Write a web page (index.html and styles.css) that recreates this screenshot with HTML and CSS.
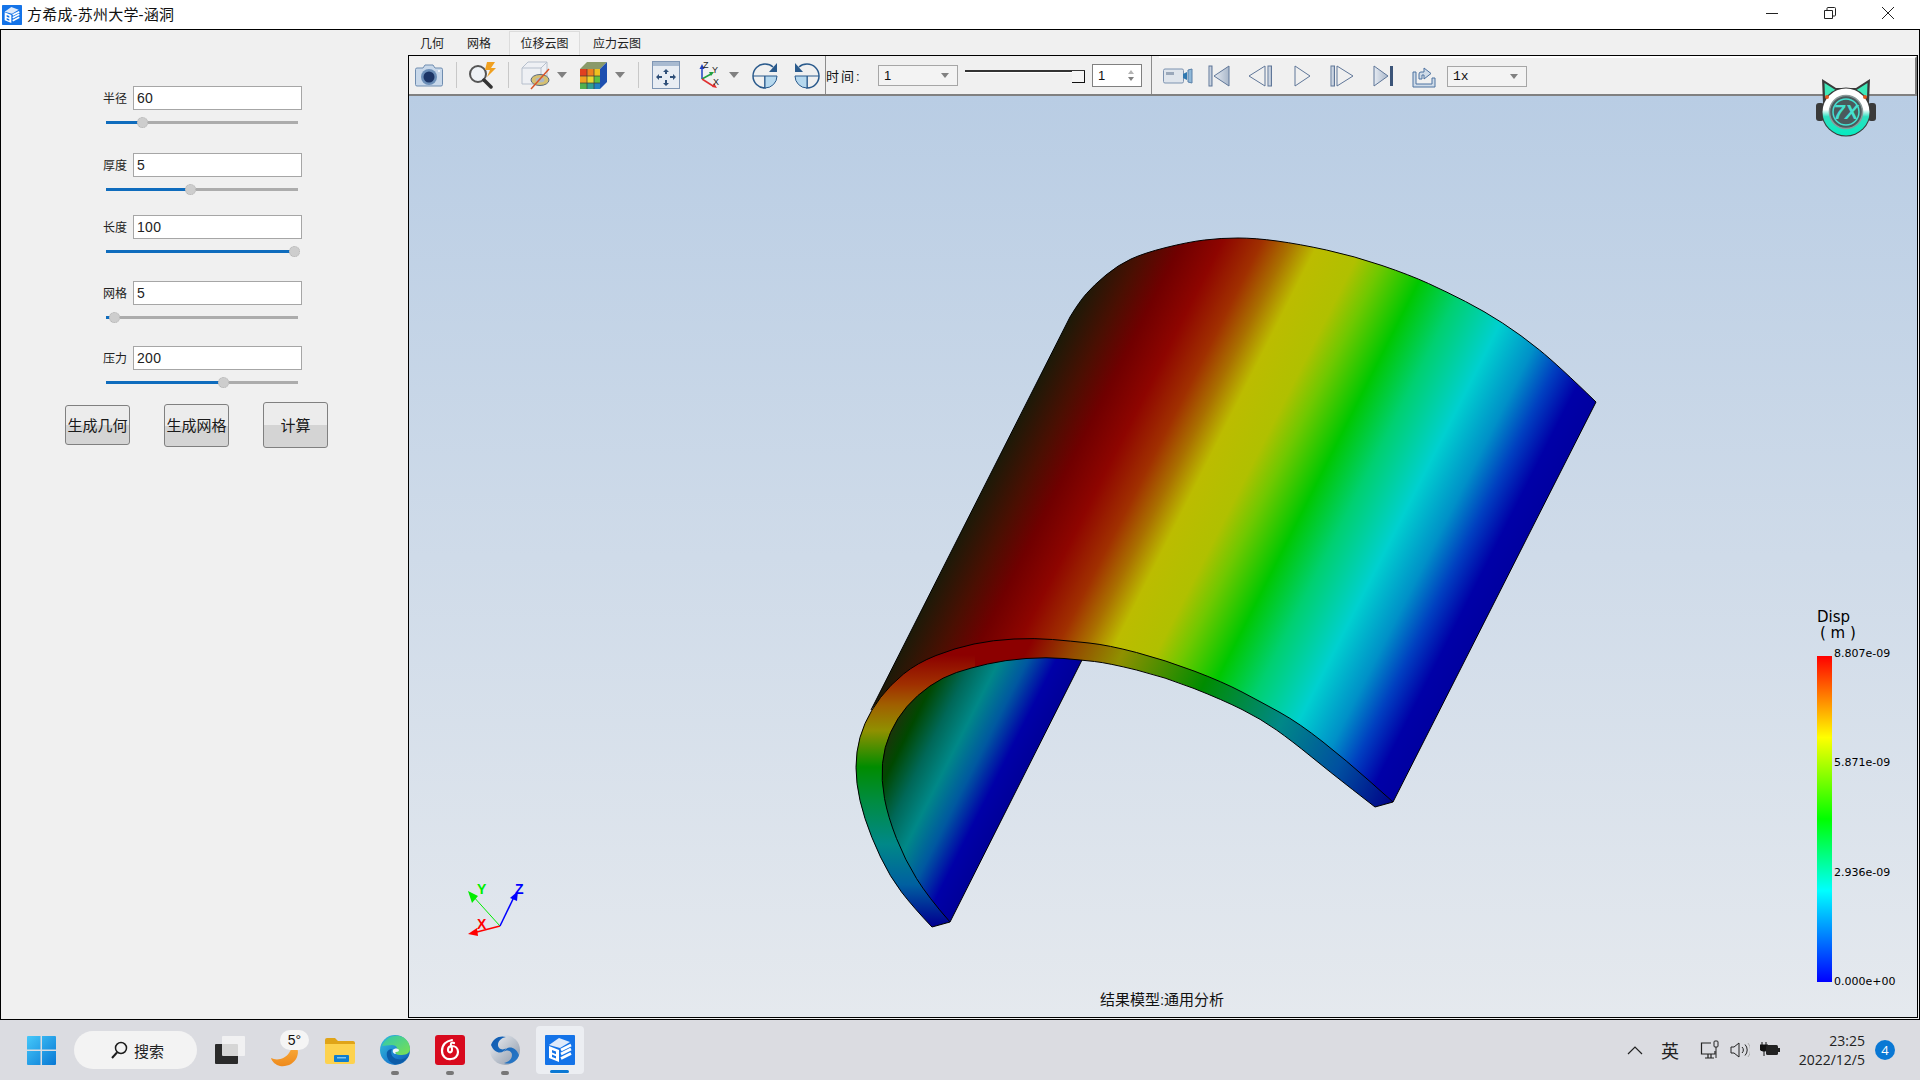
FILE: index.html
```html
<!DOCTYPE html>
<html lang="zh-CN">
<head>
  <meta charset="UTF-8">
  <title>方希成-苏州大学-涵洞</title>
  <link rel="stylesheet" href="styles.css">
</head>
<body>
  <svg class="defs" aria-hidden="true">
    <defs>
      <linearGradient id="btn-fill" x1="0" y1="0" x2="1" y2="0">
        <stop offset="0" stop-color="#e6ebf2"/>
        <stop offset="1" stop-color="#a9b7ca"/>
      </linearGradient>
      <symbol id="app-icon" viewBox="0 0 30 30">
        <rect width="30" height="30" rx="1" fill="#1473e8"/>
        <polygon points="4,10 14,3 25,7 15,13" fill="#dfeafa"/>
        <polygon points="4,11 14,15 14,27 4,23" fill="#fff"/>
        <path d="M7 15l4 1.6v2.6l-4-1.6zM7 19.600l4 1.600v2.400l-4-1.600z" fill="#1473e8"/>
        <path d="M16 15l10-5M16 19l10-5M16 23.500l10-5" stroke="#fff" stroke-width="2.600" fill="none"/>
      </symbol>
    </defs>
  </svg>

  <header class="titlebar">
    <svg class="title-icon"><use href="#app-icon"/></svg>
    <span class="title-text">方希成-苏州大学-涵洞</span>
    <div class="win-controls">
      <svg width="12" height="12" viewBox="0 0 12 12"><path d="M0 6.500h12" stroke="#222" fill="none"/></svg>
      <svg width="12" height="12" viewBox="0 0 12 12"><path d="M.5 3.500h8v8h-8zM3 3.500V1.500a1 1 0 0 1 1-1h6.500a1 1 0 0 1 1 1V8a1 1 0 0 1-1 1H8.500" stroke="#222" fill="none"/></svg>
      <svg width="12" height="12" viewBox="0 0 12 12"><path d="M0 0l12 12M12 0L0 12" stroke="#222" fill="none"/></svg>
    </div>
  </header>

  <div class="window">
    <aside class="panel">
      <div class="group">
        <div class="field"><label>半径</label><input class="num" value="60"></div>
        <div class="slider"><div class="slider-fill" style="width:19%"></div><div class="slider-thumb" style="left:19%"></div></div>
      </div>
      <div class="group group-2">
        <div class="field"><label>厚度</label><input class="num" value="5"></div>
        <div class="slider"><div class="slider-fill" style="width:44%"></div><div class="slider-thumb" style="left:44%"></div></div>
      </div>
      <div class="group group-3">
        <div class="field"><label>长度</label><input class="num" value="100"></div>
        <div class="slider"><div class="slider-fill" style="width:98%"></div><div class="slider-thumb" style="left:98%"></div></div>
      </div>
      <div class="group group-4">
        <div class="field"><label>网格</label><input class="num" value="5"></div>
        <div class="slider"><div class="slider-fill" style="width:4%"></div><div class="slider-thumb" style="left:4%"></div></div>
      </div>
      <div class="group group-5">
        <div class="field"><label>压力</label><input class="num" value="200"></div>
        <div class="slider"><div class="slider-fill" style="width:61%"></div><div class="slider-thumb" style="left:61%"></div></div>
      </div>
      <div class="actions">
        <button class="btn btn-geo">生成几何</button>
        <button class="btn btn-mesh">生成网格</button>
        <button class="btn btn-calc">计算</button>
      </div>
    </aside>

    <main class="main">
      <nav class="tabs">
        <a class="tab tab-geo">几何</a>
        <a class="tab tab-mesh">网格</a>
        <a class="tab tab-active">位移云图</a>
        <a class="tab">应力云图</a>
      </nav>

      <section class="pane">
        <div class="toolbar">
          <div class="tools">
            <svg class="m6" width="28" height="25" viewBox="0 0 28 25">
              <path d="M2 5h6l2-3h8l2 3h6a1.500 1.500 0 0 1 1.500 1.500v15A1.500 1.500 0 0 1 26 23H2a1.500 1.500 0 0 1-1.500-1.500v-15A1.500 1.500 0 0 1 2 5z" fill="#c8d8ea" stroke="#6f8db0"/>
              <circle cx="14" cy="14" r="8" fill="#6c8fb8"/>
              <circle cx="14" cy="14" r="5.500" fill="#1c3566"/>
              <circle cx="24" cy="8" r="1" fill="#fff"/>
            </svg>
            <i class="sep m13"></i>
            <svg class="m11" width="29" height="27" viewBox="0 0 29 27">
              <circle cx="10" cy="12" r="8" fill="#eef2f6" stroke="#555" stroke-width="2"/>
              <path d="M16 18l7 7" stroke="#333" stroke-width="3.500" stroke-linecap="round"/>
              <path d="M19 0h8l-4 6h5l-9 9 3-7h-5z" fill="#f0a020"/>
            </svg>
            <i class="sep m11"></i>
            <svg class="m12" width="29" height="29" viewBox="0 0 29 29">
              <path d="M1 7l6-6h19v16l-6 6H1z" fill="#eef0f4" stroke="#b6bfcc"/>
              <path d="M1 7h19v16M20 7l6-6" fill="none" stroke="#b6bfcc"/>
              <ellipse cx="19" cy="19" rx="9" ry="5.500" fill="#d6c070" stroke="#5a6a80"/>
              <ellipse cx="19" cy="19" rx="4.500" ry="2.500" fill="#aeb8c4"/>
              <path d="M28 8L10 28" stroke="#d8542a" stroke-width="1.500"/>
            </svg>
            <i class="caret m7"></i>
            <svg class="m13" width="27" height="27" viewBox="0 0 27 27">
              <polygon points="0,7 7,0 27,0 20,7" fill="#8a9a6a"/>
              <polygon points="20,7 27,0 27,20 20,27" fill="#1d4fb0"/>
              <rect y="7" width="7" height="7" fill="#e04020"/><rect x="7" y="7" width="7" height="7" fill="#f08020"/><rect x="14" y="7" width="6" height="7" fill="#f0c020"/>
              <rect y="14" width="7" height="7" fill="#f0a020"/><rect x="7" y="14" width="7" height="7" fill="#e8d830"/><rect x="14" y="14" width="6" height="7" fill="#60c040"/>
              <rect y="21" width="7" height="6" fill="#50b050"/><rect x="7" y="21" width="7" height="6" fill="#30a090"/><rect x="14" y="21" width="6" height="6" fill="#2080c0"/>
              <path d="M7 7v20M14 7v20M0 14h20M0 21h20" stroke="#3a3a3a" stroke-width=".7"/>
            </svg>
            <i class="caret m8"></i>
            <i class="sep m13"></i>
            <svg class="m13" width="28" height="28" viewBox="0 0 28 28">
              <rect x=".5" y=".5" width="27" height="27" fill="#e8edf3" stroke="#7f96b4"/>
              <rect x="1" y="1" width="26" height="4" fill="#a8bad0"/>
              <path d="M14 8l-3 3h2v2h2v-2h2zM14 25l-3-3h2v-3h2v3h2zM4 16l3-3v2h3v2H7v2zM24 16l-3-3v2h-3v2h3v2z" fill="#2f4f78"/>
            </svg>
            <svg class="m17" width="24" height="28" viewBox="0 0 24 28">
              <path d="M5 18V7" stroke="#2040c0" stroke-width="1.500"/><path d="M5 3l-2.500 5h5z" fill="#2040c0"/>
              <path d="M5 18l9-5" stroke="#20a040" stroke-width="1.500"/><path d="M17 11l-5 0 2 4z" fill="#20a040"/>
              <path d="M5 18l11 7" stroke="#e03030" stroke-width="1.500"/><path d="M20 27l-5-1 2-4z" fill="#e03030"/>
              <text class="axis-mini" x="6" y="7">Z</text><text class="axis-mini" x="15" y="12">Y</text><text class="axis-mini" x="16" y="24">X</text>
            </svg>
            <i class="caret m8"></i>
            <svg class="m13" width="26" height="27" viewBox="0 0 26 27">
              <path d="M13 14V26a12 12 0 0 1 0-24c3 0 6 1 8 3" fill="none" stroke="#2a5a8c" stroke-width="1.500"/>
              <path d="M1 14h24a12 12 0 0 1-12 12V14" fill="#b6d8ee" stroke="#2a5a8c"/>
              <path d="M17 10h8V1z" fill="#2a5a8c"/>
            </svg>
            <svg class="m16" width="26" height="27" viewBox="0 0 26 27">
              <path d="M13 14V26a12 12 0 0 0 0-24c-3 0-6 1-8 3" fill="none" stroke="#2a5a8c" stroke-width="1.500"/>
              <path d="M25 14H1a12 12 0 0 0 12 12V14" fill="#b6d8ee" stroke="#2a5a8c"/>
              <path d="M9 10H1V1z" fill="#2a5a8c"/>
            </svg>
            <i class="sep sep-tall m5"></i>
            <span class="time-label">时间:</span>
            <div class="combo m16"><span>1</span><i class="caret caret-sm"></i></div>
            <div class="track m7"><i class="track-handle"></i></div>
            <div class="spin m7"><span>1</span><div class="spin-arrows"><i class="up"></i><i class="down"></i></div></div>
            <i class="sep sep-tall m9"></i>
          </div>
          <div class="player">
            <svg class="m4" width="30" height="16" viewBox="0 0 30 16">
              <rect x=".5" y="1" width="20" height="14" rx="1.500" fill="#dfe5ec" stroke="#7d93b0"/>
              <rect x="3" y="4" width="8" height="3" fill="#9aa8ba"/>
              <path d="M20 6l4-2v8l-4-2z" fill="#2f78b0"/><path d="M25 2l4-1v14l-4-1z" fill="#8fb8d8" stroke="#5a80a8"/>
            </svg>
            <svg class="m15" width="22" height="22" viewBox="0 0 22 22"><rect x="1" y="1" width="3" height="20" fill="url(#btn-fill)" stroke="#5f7698"/><path d="M21 1v20L6 11z" fill="url(#btn-fill)" stroke="#5f7698"/></svg>
            <svg class="m18" width="25" height="22" viewBox="0 0 25 22"><path d="M17 1v20L1 11z" fill="none" stroke="#5f7698"/><rect x="20" y="1" width="3.500" height="20" fill="url(#btn-fill)" stroke="#5f7698"/></svg>
            <svg class="m21" width="17" height="22" viewBox="0 0 17 22"><path d="M1 1v20l15-10z" fill="none" stroke="#5f7698"/></svg>
            <svg class="m19" width="24" height="22" viewBox="0 0 24 22"><rect x="1" y="1" width="3.500" height="20" fill="url(#btn-fill)" stroke="#5f7698"/><path d="M7 1v20l16-10z" fill="none" stroke="#5f7698"/></svg>
            <svg class="m19" width="21" height="22" viewBox="0 0 21 22"><path d="M1 1v20l14-10z" fill="url(#btn-fill)" stroke="#5f7698"/><rect x="17" y="1" width="3" height="20" fill="#3b5478"/></svg>
            <svg class="m18" width="24" height="24" viewBox="0 0 24 24"><path d="M1 8v15h22v-9h-3v6H4V8z" fill="#cfdbe8" stroke="#4d72a0"/><path d="M7 15v-5a2 2 0 0 1 2-2h3V4l7 5.500L12 15v-4H10v4z" fill="#cfdbe8" stroke="#4d72a0"/></svg>
            <div class="combo combo-speed m11"><span>1x</span><i class="caret caret-sm"></i></div>
          </div>
        </div>

        <div class="viewport">
          <svg class="scene" viewBox="409 96 1507 921" width="1507" height="921">
            <defs>
              <linearGradient id="outer" gradientUnits="userSpaceOnUse" x1="1070" y1="317" x2="1524" y2="547">
                <stop offset="0" stop-color="#1c1a08"/>
                <stop offset=".07" stop-color="#4a0f02"/>
                <stop offset=".13" stop-color="#700000"/>
                <stop offset=".2" stop-color="#8e0500"/>
                <stop offset=".27" stop-color="#a03000"/>
                <stop offset=".32" stop-color="#aa7000"/>
                <stop offset=".37" stop-color="#bcbc00"/>
                <stop offset=".45" stop-color="#b0c000"/>
                <stop offset=".5" stop-color="#70c800"/>
                <stop offset=".58" stop-color="#00c800"/>
                <stop offset=".66" stop-color="#00d070"/>
                <stop offset=".76" stop-color="#00d0d0"/>
                <stop offset=".84" stop-color="#0090c8"/>
                <stop offset=".895" stop-color="#0040c0"/>
                <stop offset=".95" stop-color="#0000a8"/>
                <stop offset="1" stop-color="#0000a0"/>
              </linearGradient>
              <linearGradient id="inner" gradientUnits="userSpaceOnUse" x1="889" y1="714" x2="1022" y2="781">
                <stop offset="0" stop-color="#2a2a10"/>
                <stop offset=".17" stop-color="#004800"/>
                <stop offset=".34" stop-color="#006858"/>
                <stop offset=".5" stop-color="#008888"/>
                <stop offset=".67" stop-color="#0058a0"/>
                <stop offset=".84" stop-color="#0000a8"/>
                <stop offset="1" stop-color="#000098"/>
              </linearGradient>
              <linearGradient id="rim-right" gradientUnits="userSpaceOnUse" x1="1070" y1="317" x2="1524" y2="547">
                <stop offset=".1" stop-color="#8c0000"/>
                <stop offset=".22" stop-color="#8c0000"/>
                <stop offset=".3" stop-color="#944800"/>
                <stop offset=".39" stop-color="#909000"/>
                <stop offset=".56" stop-color="#008c00"/>
                <stop offset=".73" stop-color="#008888"/>
                <stop offset=".87" stop-color="#0050a0"/>
                <stop offset="1" stop-color="#000088"/>
              </linearGradient>
              <linearGradient id="rim-left" gradientUnits="userSpaceOnUse" x1="0" y1="655" x2="0" y2="925">
                <stop offset="0" stop-color="#8c0000"/>
                <stop offset=".11" stop-color="#a03000"/>
                <stop offset=".185" stop-color="#a06000"/>
                <stop offset=".28" stop-color="#909000"/>
                <stop offset=".415" stop-color="#008c00"/>
                <stop offset=".54" stop-color="#008c40"/>
                <stop offset=".7" stop-color="#008888"/>
                <stop offset=".85" stop-color="#0060a0"/>
                <stop offset="1" stop-color="#000090"/>
              </linearGradient>
              <path id="rim" d="M1393 802L1370 781.500Q1347 761 1323 742Q1299 723 1280 712.500Q1261 702 1242 692Q1223 682 1194 671Q1165 660 1136.500 652.500Q1108 645 1089 643Q1070 641 1052.500 639.500Q1035 638 1014 639Q993 640 974 644Q955 648 936 655.500Q917 663 903.500 674Q890 685 880.500 697.500Q871 710 865 723.500Q859 737 857 752Q855 767 857 783.500Q859 800 865 818.500Q871 837 880.500 857Q890 877 901.500 892Q913 907 932 927L950 922Q928 897 916.500 878.500Q905 860 896.500 838.500Q888 817 884.500 798.500Q881 780 882.500 763.500Q884 747 890.500 732.500Q897 718 907 706.500Q917 695 930 686Q943 677 956.500 672.500Q970 668 987.500 664Q1005 660 1026 658.500Q1047 657 1064 658.500Q1081 660 1094.500 661.500Q1108 663 1136.500 670Q1165 677 1194 688.500Q1223 700 1242 709.500Q1261 719 1276.500 730Q1292 741 1311 756.500Q1330 772 1352.500 789.500L1375 807Z"/>
              <clipPath id="clip-left"><rect x="800" y="600" width="176" height="360"/></clipPath>
              <clipPath id="clip-right"><rect x="975" y="600" width="500" height="360"/></clipPath>
            </defs>
            <!-- culvert shell -->
            <path d="M1070 317Q1079 302 1086.500 293.500Q1094 285 1106 275Q1118 265 1131 259Q1144 253 1166 247.500Q1188 242 1204.500 240Q1221 238 1238 238Q1255 238 1277 241Q1299 244 1326.500 250Q1354 256 1382 265.500Q1410 275 1428.500 283.500Q1447 292 1465.500 301.500Q1484 311 1502.500 323Q1521 335 1539.500 350Q1558 365 1596 402L1393 802L1299 726L1223 685L1165 663L1108 648L1035 641L955 651L917 666L890 688L871 710Z" fill="url(#outer)"/>
            <polygon points="1082,655 1082,660 950,922 926,899 902,862 884,818 877,780 880,746 893,716 914,692 941,674 969,665 1005,657 1047,654" fill="url(#inner)"/>
            <use href="#rim" fill="url(#rim-left)" clip-path="url(#clip-left)"/>
            <use href="#rim" fill="url(#rim-right)" clip-path="url(#clip-right)"/>
            <use href="#rim" fill="none" stroke="#000" stroke-width="1"/>
            <path class="edge" d="M1070 317Q1079 302 1086.500 293.500Q1094 285 1106 275Q1118 265 1131 259Q1144 253 1166 247.500Q1188 242 1204.500 240Q1221 238 1238 238Q1255 238 1277 241Q1299 244 1326.500 250Q1354 256 1382 265.500Q1410 275 1428.500 283.500Q1447 292 1465.500 301.500Q1484 311 1502.500 323Q1521 335 1539.500 350Q1558 365 1596 402L1393 802"/>
            <path class="edge" d="M1082 660L950 922M1070 317L871 710"/>
            <!-- axis triad -->
            <path d="M500 926L473 933" stroke="#f00" stroke-width="1.500"/>
            <path d="M468 934l9-6 1 8z" fill="#f00"/>
            <path d="M500 926L472 895" stroke="#0e0" stroke-width="1"/>
            <path d="M468 891l10 5-6 7z" fill="#0e0"/>
            <path d="M500 926L514 897" stroke="#00f" stroke-width="1.500"/>
            <path d="M518 891l-1 10-7-3z" fill="#00f"/>
            <text class="axis-label axis-x" x="477" y="929">X</text>
            <text class="axis-label axis-y" x="477" y="894">Y</text>
            <text class="axis-label axis-z" x="515" y="894">Z</text>
          </svg>

          <div class="legend">
            <div class="legend-title">Disp<div class="legend-unit">( m )</div></div>
            <div class="legend-scale">
              <div class="legend-bar"></div>
              <div class="legend-labels">
                <span>8.807e-09</span><span>5.871e-09</span><span>2.936e-09</span><span>0.000e+00</span>
              </div>
            </div>
          </div>
          <div class="caption">结果模型:通用分析</div>
        </div>

        <svg class="mascot" width="60" height="58" viewBox="0 0 60 58">
          <defs>
            <linearGradient id="mascot-face" x1="0" y1="0" x2="0" y2="1">
              <stop offset=".45" stop-color="#fff"/>
              <stop offset=".6" stop-color="#2fe0c0"/>
              <stop offset="1" stop-color="#05eac0"/>
            </linearGradient>
          </defs>
          <path d="M7 24L6 0l14 9h20l14-9-1 24z" fill="#3a3a3a"/>
          <path d="M9 18L8.500 4l11 7zM51 18l.5-14-11 7z" fill="#3fe8b8"/>
          <rect x="0" y="24" width="8" height="18" rx="3" fill="#3a3a3a"/>
          <rect x="52" y="24" width="8" height="18" rx="3" fill="#3a3a3a"/>
          <circle cx="30" cy="33" r="24.500" fill="#3a3a3a"/>
          <circle cx="30" cy="33" r="23.500" fill="url(#mascot-face)"/>
          <circle cx="11" cy="18" r="2" fill="#e05a20"/>
          <circle cx="49" cy="18" r="2" fill="#e05a20"/>
          <circle cx="30" cy="33" r="16.500" fill="#4a5a5c" stroke="#8a9a9a" stroke-width="1.500"/>
          <circle cx="30" cy="33" r="13" fill="none" stroke="#45e0d0" stroke-width="1.500"/>
          <text class="mascot-text" x="30" y="40">7X</text>
        </svg>
      </section>
    </main>
  </div>

  <footer class="taskbar">
    <div class="task-left">
      <svg class="start" width="29" height="29" viewBox="0 0 29 29">
        <defs><linearGradient id="win" x1="0" y1="0" x2="1" y2="1"><stop offset="0" stop-color="#45c8fa"/><stop offset="1" stop-color="#0878d4"/></linearGradient></defs>
        <path d="M0 1a1 1 0 0 1 1-1h12.500v13.500H0zM15 0h13a1 1 0 0 1 1 1v12.500H15zM0 15h13.500v14H1a1 1 0 0 1-1-1zM15 15h14v13a1 1 0 0 1-1 1H15z" fill="url(#win)"/>
      </svg>
      <div class="search">
        <svg width="17" height="18" viewBox="0 0 17 18"><circle cx="10" cy="7" r="5.500" fill="none" stroke="#1c1c1c" stroke-width="1.500"/><path d="M6 11.500L1 17" stroke="#1c1c1c" stroke-width="2"/></svg>
        <span>搜索</span>
      </div>
      <svg class="taskview" width="30" height="28" viewBox="0 0 30 28">
        <rect y="8" width="23" height="20" rx="1" fill="#2a2a2a"/>
        <rect x="7" width="23" height="20" rx="1" fill="#f4f4f4" opacity=".85"/>
      </svg>
      <div class="weather">
        <svg width="28" height="24" viewBox="0 0 28 24">
          <defs><linearGradient id="moon" x1="0" y1="0" x2="0" y2="1"><stop offset="0" stop-color="#fbb040"/><stop offset="1" stop-color="#ee8a1c"/></linearGradient></defs>
          <path d="M0 15c6 3 14 1 18-5 2-3 4-7 4-10 5 3 6 9 4 14-3 7-10 10-17 9-4-1-8-4-9-8z" fill="url(#moon)"/>
        </svg>
        <span class="weather-temp">5°</span>
      </div>
      <svg class="files" width="30" height="26" viewBox="0 0 30 26">
        <path d="M0 2a2 2 0 0 1 2-2h8l3 3h15a2 2 0 0 1 2 2v3H0z" fill="#e0a418"/>
        <path d="M0 6h30v18a2 2 0 0 1-2 2H2a2 2 0 0 1-2-2z" fill="#fdd24e"/>
        <rect x="9" y="17" width="15" height="7" rx="1" fill="#0f7ed0"/>
        <rect x="12" y="19" width="9" height="1.500" fill="#7cc4f0"/>
      </svg>
      <div class="app app-edge">
        <svg width="30" height="30" viewBox="0 0 30 30">
          <defs>
            <linearGradient id="edge-a" x1="0" y1="0" x2="1" y2="1"><stop offset="0" stop-color="#38c6d8"/><stop offset=".6" stop-color="#1a7fd0"/><stop offset="1" stop-color="#0c5ca8"/></linearGradient>
            <linearGradient id="edge-b" x1="0" y1="0" x2="1" y2="1"><stop offset="0" stop-color="#30c8b0"/><stop offset="1" stop-color="#7ae050"/></linearGradient>
          </defs>
          <circle cx="15" cy="15" r="15" fill="url(#edge-a)"/>
          <path d="M2 11C5 3 13 0 19 1c7 1 11 7 11 13 0 5-5 6-10 6-3 0-5-1-5-3 0-1 1-1 2-2 1-2-1-5-5-5-4 0-8 1-10 1z" fill="url(#edge-b)"/>
          <path d="M12 14c-2 4 0 9 5 10 4 1 8 0 11-3-3 6-9 9-14 8-6-2-8-8-7-12 1-2 3-3 5-3z" fill="#0c5ca8"/>
          <path d="M13 15c1-2 5-2 6 0 0 1-1 2-3 2-1 0-1 1 0 2-2 0-4-2-3-4z" fill="#eef6fb"/>
        </svg>
        <i class="app-dot"></i>
      </div>
      <div class="app app-music">
        <svg width="30" height="30" viewBox="0 0 30 30">
          <rect width="30" height="30" rx="3" fill="#d80a1e"/>
          <path d="M17 5c-6 1-10 5-10 11 0 5 4 9 9 8 4 0 7-3 7-7s-3-6-6-6c-3 0-4 2-4 4s2 3 3 2c2-1 1-4 0-7-.5-2 1-3 3-2" fill="none" stroke="#fff" stroke-width="2.200" stroke-linecap="round"/>
        </svg>
        <i class="app-dot"></i>
      </div>
      <div class="app app-swirl">
        <svg width="30" height="30" viewBox="0 0 30 30">
          <defs>
            <linearGradient id="swirl-a" x1="0" y1="0" x2="1" y2="1"><stop offset="0" stop-color="#0e5ab0"/><stop offset="1" stop-color="#2a7ac8"/></linearGradient>
            <linearGradient id="swirl-b" x1="0" y1="0" x2="1" y2="1"><stop offset="0" stop-color="#f0f2f5"/><stop offset="1" stop-color="#8a96a8"/></linearGradient>
          </defs>
          <circle cx="15" cy="15" r="15" fill="url(#swirl-b)"/>
          <path d="M1 10C3 3 10 0 16 2c-5 1-8 4-8 8s5 6 8 3c-2 6-11 7-15-3zM29 20c-2 7-9 10-15 8 5-1 8-4 8-8s-5-6-8-3c2-6 11-7 15 3z" fill="url(#swirl-a)"/>
        </svg>
        <i class="app-dot"></i>
      </div>
      <div class="app app-active">
        <svg width="30" height="30"><use href="#app-icon"/></svg>
        <i class="app-bar"></i>
      </div>
    </div>

    <div class="tray">
      <svg class="tray-chevron" width="16" height="9" viewBox="0 0 16 9"><path d="M1 8l7-7 7 7" fill="none" stroke="#222" stroke-width="1.200"/></svg>
      <span class="tray-ime">英</span>
      <svg class="tray-net" width="20" height="20" viewBox="0 0 20 20">
        <path d="M11 3H1.500v11H15v-3M5 18h9M8 14v4M11 14v4" fill="none" stroke="#222" stroke-width="1.200"/>
        <rect x="14" y="1" width="4" height="6" rx="1" fill="none" stroke="#222"/><path d="M16 7v11" stroke="#222"/>
      </svg>
      <svg class="tray-vol" width="20" height="16" viewBox="0 0 20 16">
        <path d="M1 5h3l5-4v14l-5-4H1z" fill="none" stroke="#222"/>
        <path d="M12 5a4 4 0 0 1 0 6" fill="none" stroke="#222"/>
        <path d="M15 2.500a8 8 0 0 1 0 11" fill="none" stroke="#222"/>
        <path d="M18 1a11 11 0 0 1 0 14" fill="none" stroke="#aaa"/>
      </svg>
      <svg class="tray-bat" width="20" height="16" viewBox="0 0 20 16">
        <path d="M2 0v3M6 0v3M0 3h8v3a3 3 0 0 1-3 3H3a3 3 0 0 1-3-3zM4 9v5" stroke="#111" fill="#111"/>
        <rect x="6" y="3" width="12" height="10" rx="1.500" fill="#222"/>
        <rect x="18" y="6" width="2" height="4" fill="#222"/>
      </svg>
      <div class="clock"><span>23:25</span><span>2022/12/5</span></div>
      <span class="badge">4</span>
    </div>
  </footer>
</body>
</html>
```

FILE: styles.css
```css
* { box-sizing: border-box; }
html, body { margin: 0; height: 100%; }
body { width: 1920px; height: 1080px; overflow: hidden; display: flex; flex-direction: column; background: #fff; font-family: "Liberation Sans", "Noto Sans CJK SC", sans-serif; color: #111; }
svg { display: block; flex: none; }
.defs { position: absolute; width: 0; height: 0; }

/* title bar */
.titlebar { height: 29px; display: flex; align-items: center; background: #fff; padding-left: 2px; flex: none; }
.title-icon { width: 20px; height: 20px; }
.title-text { margin-left: 5px; padding-bottom: 2px; font-size: 15px; letter-spacing: .2px; }
.win-controls { margin-left: auto; display: flex; gap: 46px; padding-right: 26px; margin-top: -3px; }

/* window */
.window { height: 991px; flex: none; display: flex; border: 1px solid #000; background: #f0f0f0; }
.panel { width: 407px; flex: none; padding-top: 56px; }
.group-2 { margin-top: 29px; }
.group-3 { margin-top: 24px; }
.group-4 { margin-top: 28px; }
.group-5 { margin-top: 27px; }
.field { display: flex; align-items: center; height: 24px; }
.field label { width: 132px; padding: 0 6px 2px 0; text-align: right; font-size: 12px; color: #222; }
.num { width: 169px; height: 24px; border: 1px solid #a6a6a6; background: #fff; padding: 0 3px; font: 14px "Liberation Sans", sans-serif; letter-spacing: .3px; color: #222; outline: none; }
.slider { position: relative; width: 192px; height: 3px; margin: 11px 0 0 105px; background: #acacac; }
.slider-fill { height: 3px; background: #0f6cbd; }
.slider-thumb { position: absolute; top: -4px; width: 11px; height: 11px; margin-left: -5px; border-radius: 50%; background: #cdcdcd; border: 1px dotted #b4b4b4; }
.actions { display: flex; gap: 34px; margin-top: 18px; padding-left: 64px; align-items: flex-start; }
.btn { width: 65px; padding: 0 0 2px; border: 1px solid #808080; border-radius: 3px; background: linear-gradient(#ececec 50%, #d4d4d4 50%); font: 15px "Noto Sans CJK SC", sans-serif; color: #1a1a1a; }
.btn-geo { height: 40px; margin-top: 3px; }
.btn-mesh { height: 43px; margin-top: 2px; }
.btn-calc { height: 46px; }

/* tabs */
.main { flex: 1; min-width: 0; display: flex; flex-direction: column; }
.tabs { height: 25px; flex: none; display: flex; align-items: flex-end; padding-left: 1px; font-size: 12px; }
.tab { height: 24px; line-height: 26px; padding: 0 11px; color: #222; }
.tab-geo { padding-right: 0; }
.tab-mesh { padding: 0 0 0 23px; }
.tab-active { margin-left: 18px; width: 71px; padding: 0; text-align: center; background: #f3f3f3; border: 1px solid #dcdcdc; border-bottom: none; line-height: 24px; }
.tab-active + .tab { margin-left: 2px; }

/* result pane */
.pane { position: relative; flex: 1; display: flex; flex-direction: column; min-height: 0; margin: 0 1px 1px 0; border: 1px solid #000; border-right-color: #000; }
.toolbar { height: 40px; flex: none; display: flex; background: #f0f0f0; border-bottom: 2px solid #808080; }
.tools { display: flex; align-items: center; height: 38px; width: 750px; flex: none; }
.player { flex: 1; display: flex; align-items: center; height: 38px; border-top: 2px solid #fff; border-right: 2px solid #7a7a7a; }

.m4 { margin-left: 4px; }
.m5 { margin-left: 5px; }
.m6 { margin-left: 6px; }
.m7 { margin-left: 7px; }
.m8 { margin-left: 8px; }
.m9 { margin-left: 9px; }
.m11 { margin-left: 11px; }
.m12 { margin-left: 12px; }
.m13 { margin-left: 13px; }
.m15 { margin-left: 15px; }
.m16 { margin-left: 16px; }
.m17 { margin-left: 17px; }
.m18 { margin-left: 18px; }
.m19 { margin-left: 19px; }
.m21 { margin-left: 21px; }

.sep { display: block; flex: none; width: 1px; height: 26px; background: #c8c8c8; }
.sep-tall { height: 38px; background: #8c8c8c; }
.caret { display: block; flex: none; width: 0; height: 0; border-left: 5.500px solid transparent; border-right: 5.500px solid transparent; border-top: 6px solid #808080; }
.caret-sm { border-left-width: 4.500px; border-right-width: 4.500px; border-top-width: 5px; }
.axis-mini { font: 9px "Liberation Sans", sans-serif; fill: #222; }
.time-label { width: 36px; font-size: 13px; letter-spacing: 2px; white-space: nowrap; flex: none; }
.combo { width: 80px; height: 21px; flex: none; display: flex; align-items: center; justify-content: space-between; padding: 0 8px 0 5px; border: 1px solid #a6a6a6; background: #f3f3f3; font-size: 13px; }
.combo-speed { font-family: "Liberation Mono", monospace; background: #f3f3f3; }
.track { position: relative; width: 120px; height: 14px; flex: none; margin-top: 4px; border-top: 2px solid #333; box-shadow: inset 0 1px 0 #fff; }
.track-handle { position: absolute; right: 0; top: -1px; width: 13px; height: 12px; background: #f4f4f4; border-right: 1px solid #111; border-bottom: 1px solid #111; }
.spin { width: 50px; height: 23px; flex: none; display: flex; align-items: center; justify-content: space-between; padding: 0 7px 0 5px; border: 1px solid #808080; background: #fff; font-size: 13px; }
.spin-arrows { display: flex; flex-direction: column; gap: 3px; }
.spin-arrows i { display: block; width: 0; height: 0; border-left: 3px solid transparent; border-right: 3px solid transparent; }
.spin-arrows .up { border-bottom: 4px solid #b4b4b4; }
.spin-arrows .down { border-top: 4px solid #808080; }

/* viewport */
.viewport { position: relative; flex: 1; min-height: 0; overflow: hidden; background: linear-gradient(#b9cde4, #e5e9ee); }
.scene { position: absolute; left: 0; top: 0; }
.edge { fill: none; stroke: #000; stroke-width: 1; }
.axis-label { font: bold 14px "Liberation Sans", sans-serif; }
.axis-x { fill: #f00; }
.axis-y { fill: #0e0; }
.axis-z { fill: #00f; }
.legend { position: absolute; left: 1408px; top: 513px; color: #000; }
.legend-title { font: 15px/16px "DejaVu Sans", sans-serif; height: 47px; white-space: nowrap; }
.legend-unit { padding-left: 3px; }
.legend-scale { display: flex; }
.legend-bar { width: 15px; height: 326px; background: linear-gradient(#f00, #ff0 25%, #0f0 50%, #0ff 72%, #00f); }
.legend-labels { height: 342px; margin: -9px 0 0 2px; display: flex; flex-direction: column; justify-content: space-between; font: 11px/14px "DejaVu Sans", sans-serif; white-space: nowrap; }
.caption { position: absolute; left: 0; width: 1507px; padding-right: 1px; top: 892px; text-align: center; font-size: 15px; color: #111; }
.mascot { position: absolute; left: 1407px; top: 23px; }
.mascot-text { font: italic bold 20px "Liberation Sans", sans-serif; fill: #45e0d0; text-anchor: middle; }

/* taskbar */
.taskbar { height: 60px; flex: none; display: flex; align-items: center; justify-content: space-between; background: #dbdce1; }
.task-left { display: flex; align-items: center; position: relative; height: 60px; padding-left: 27px; }
.search { width: 123px; height: 38px; margin-left: 18px; display: flex; align-items: center; padding-left: 37px; gap: 6px; border-radius: 19px; background: #f3f3f3; font-size: 15px; color: #222; }
.taskview { margin-left: 18px; }
.weather { position: relative; margin-left: 26px; padding-top: 10px; }
.weather-temp { position: absolute; left: 9px; top: -3px; width: 29px; height: 20px; line-height: 20px; text-align: center; border-radius: 10px; background: #f5f5f5; font-size: 14px; }
.files { margin-left: 26px; margin-top: 2px; }
.app { position: relative; display: flex; align-items: center; justify-content: center; width: 48px; height: 48px; }
.app-edge { margin-left: 16px; }
.app-music { margin-left: 7px; }
.app-swirl { margin-left: 7px; }
.app-active { margin-left: 7px; border-radius: 4px; background: #eceef2; }
.app-dot { position: absolute; left: 20px; bottom: -1px; width: 8px; height: 4px; border-radius: 2px; background: #777; }
.app-bar { position: absolute; left: 14px; bottom: 1px; width: 19px; height: 3px; border-radius: 2px; background: #0a78d4; }

.tray { display: flex; align-items: center; height: 60px; padding-right: 25px; }
.tray-ime { margin-left: 18px; font-size: 18px; color: #222; }
.tray-net { margin-left: 21px; }
.tray-vol { margin-left: 10px; }
.tray-bat { margin-left: 10px; }
.clock { width: 85px; display: flex; flex-direction: column; align-items: flex-end; gap: 1px; font: 14px/18px "Open Sans", sans-serif; color: #222; }
.badge { width: 20px; height: 20px; margin-left: 10px; border-radius: 50%; background: #0a78d4; color: #fff; font: 13px/20px "Open Sans", sans-serif; text-align: center; }
```
